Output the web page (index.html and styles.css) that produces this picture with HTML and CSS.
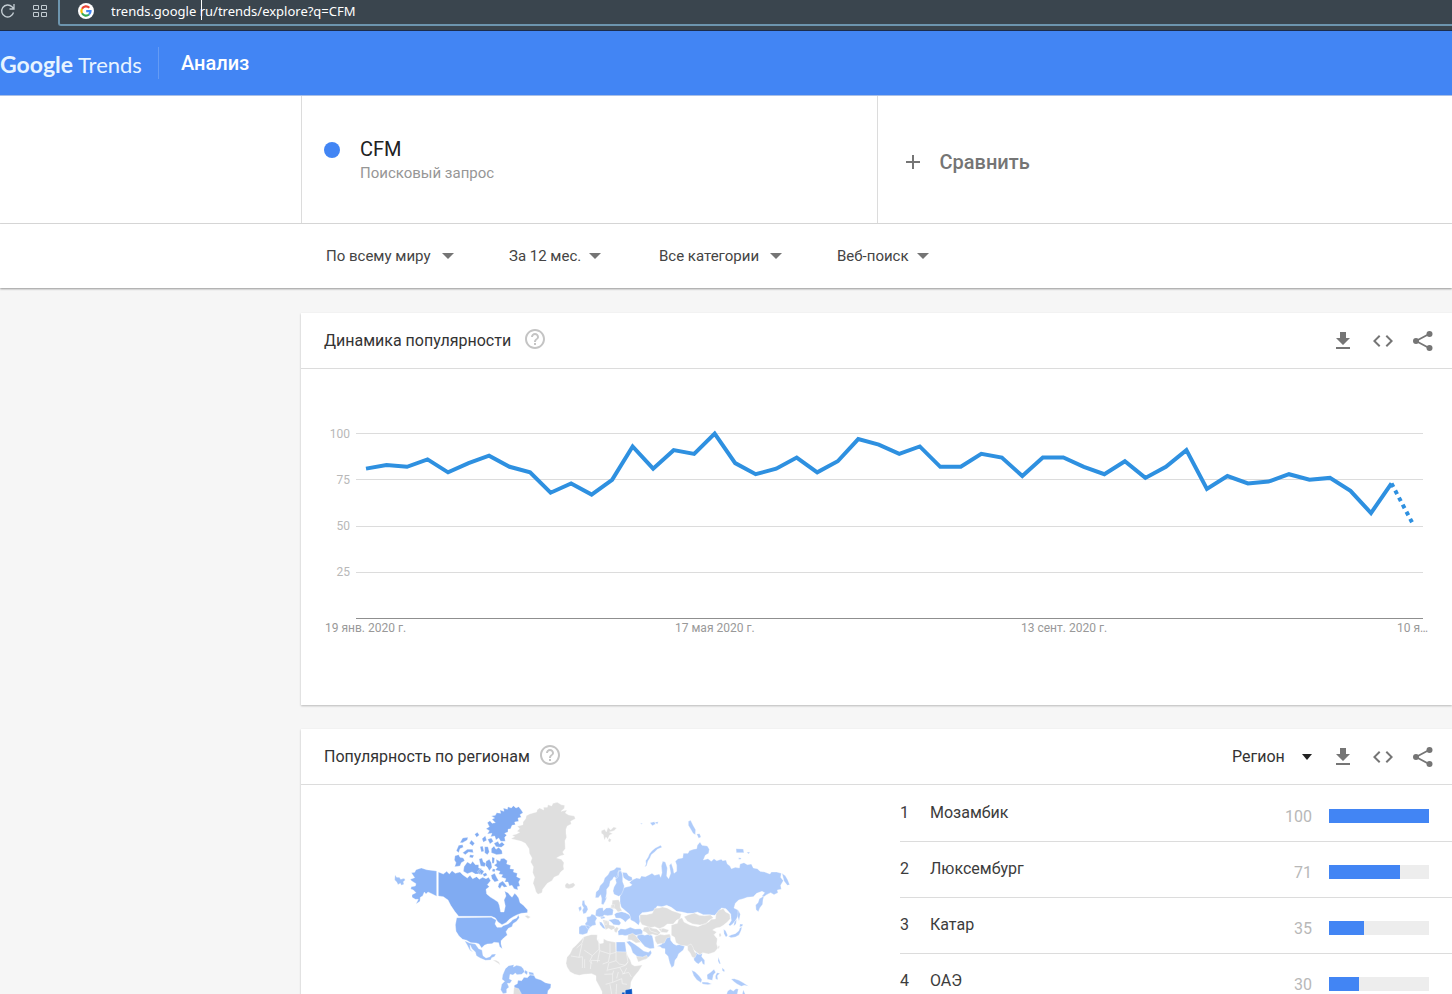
FILE: index.html
```html
<!DOCTYPE html>
<html lang="ru">
<head>
<meta charset="utf-8">
<title>CFM – Анализ – Google Trends</title>
<link rel="stylesheet" href="styles.css">
</head>
<body>
<svg class="sprite" aria-hidden="true">
  <symbol id="i-download" viewBox="0 0 24 24"><path d="M19 9h-4V3H9v6H5l7 7 7-7zM5 18v2h14v-2H5z"/></symbol>
  <symbol id="i-code" viewBox="0 0 24 24"><path d="M9.4 16.6 4.8 12l4.600-4.600L8 6l-6 6 6 6 1.400-1.400zm5.200 0 4.600-4.600-4.600-4.600L16 6l6 6-6 6-1.400-1.400z"/></symbol>
  <symbol id="i-share" viewBox="0 0 24 24"><path d="M5 12 19 4.500M5 12l14 7.500" fill="none" stroke="currentColor" stroke-width="1.800"/><circle cx="5" cy="12" r="3"/><circle cx="18.500" cy="5" r="3"/><circle cx="18.500" cy="19" r="3"/></symbol>
  <symbol id="i-help" viewBox="0 0 24 24"><path d="M11 18h2v-2h-2v2zm1-16C6.480 2 2 6.480 2 12s4.480 10 10 10 10-4.480 10-10S17.520 2 12 2zm0 18c-4.410 0-8-3.590-8-8s3.590-8 8-8 8 3.590 8 8-3.590 8-8 8zm0-14c-2.210 0-4 1.790-4 4h2c0-1.100.9-2 2-2s2 .9 2 2c0 2-3 1.750-3 5h2c0-2.250 3-2.500 3-5 0-2.210-1.790-4-4-4z"/></symbol>
</svg>

<div class="app">
  <div class="browser">
    <button class="browser-btn" aria-label="Обновить"><svg width="16" height="16" viewBox="0 0 16 16"><path d="M13.500 9.500A6 6 0 1 1 12 3.800L13.500 5.500M14 1v5H9.500" fill="none" stroke="currentColor" stroke-width="1.300"/></svg></button>
    <button class="browser-btn" aria-label="Экспресс-панель"><svg width="14" height="12" viewBox="0 0 14 12"><path d="M.5.500h5v4h-5zM8.500.500h5v4h-5zM.5 7.500h5v4h-5zM8.500 7.500h5v4h-5z" fill="none" stroke="currentColor"/></svg></button>
    <div class="address">
      <svg class="favicon" width="16" height="16" viewBox="0 0 16 16"><circle cx="8" cy="8" r="8" fill="#fff"/><g fill="none" stroke-width="2.200"><path d="M11.300 4.700A4.600 4.600 0 0 0 4 5.700" stroke="#ea4335"/><path d="M4 5.700a4.600 4.600 0 0 0 0 4.600" stroke="#fbbc05"/><path d="M4 10.300a4.600 4.600 0 0 0 7 1.200" stroke="#34a853"/><path d="M11 11.500A4.600 4.600 0 0 0 12.500 8.200H8.200" stroke="#4285f4"/></g></svg>
      <div class="url"><input type="text" aria-label="Адрес" value="trends.google ru/trends/explore?q=CFM"><span class="caret"></span></div>
    </div>
  </div>

  <header class="topbar">
    <a class="logo" href="#"><span class="logo-main">Google</span> <span class="logo-sub">Trends</span></a>
    <span class="topbar-line"></span>
    <h1 class="topbar-title">Анализ</h1>
  </header>

  <section class="terms">
    <div class="term">
      <span class="dot"></span>
      <div><div class="term-name">CFM</div><div class="term-kind">Поисковый запрос</div></div>
    </div>
    <button class="compare"><svg width="16" height="16" viewBox="0 0 16 16"><path d="M8 1v14M1 8h14" stroke="currentColor" stroke-width="2"/></svg>Сравнить</button>
  </section>

  <section class="filters">
    <div class="pick"><select class="w-long" aria-label="Регион"><option>По всему миру</option></select></div>
    <div class="pick"><select class="w-short" aria-label="Период"><option>За 12 мес.</option></select></div>
    <div class="pick"><select class="w-mid" aria-label="Категория"><option>Все категории</option></select></div>
    <div class="pick"><select class="w-short" aria-label="Тип поиска"><option>Веб-поиск</option></select></div>
  </section>

  <main class="content">
    <section class="card">
      <div class="card-head wide-gap">
        <h2>Динамика популярности</h2>
        <button class="help" aria-label="Справка"><svg><use href="#i-help"/></svg></button>
        <div class="tools">
          <button aria-label="Скачать"><svg><use href="#i-download"/></svg></button>
          <button aria-label="Встроить"><svg><use href="#i-code"/></svg></button>
          <button aria-label="Поделиться"><svg><use href="#i-share"/></svg></button>
        </div>
      </div>
      <svg class="chart" viewBox="0 0 1151 336">
        <path class="grid" d="M55 64.500H1122M55 110.500H1122M55 157.500H1122M55 203.500H1122"/>
        <path class="axis" d="M55 249.500H1122"/>
        <g class="tick" text-anchor="end"><text x="49" y="69">100</text><text x="49" y="115">75</text><text x="49" y="161">50</text><text x="49" y="207">25</text></g>
        <g class="date"><text x="24" y="263">19 янв. 2020 г.</text><text x="374" y="263">17 мая 2020 г.</text><text x="720" y="263">13 сент. 2020 г.</text><text x="1096" y="263">10 я…</text></g>
        <g transform="translate(65 249.500) scale(20.510 -1.850)">
          <polyline class="trend" points="0,81 1,83 2,82 3,86 4,79 5,84 6,88 7,82 8,79 9,68 10,73 11,67 12,75 13,93 14,81 15,91 16,89 17,100 18,84 19,78 20,81 21,87 22,79 23,85 24,97 25,94 26,89 27,93 28,82 29,82 30,89 31,87 32,77 33,87 34,87 35,82 36,78 37,85 38,76 39,82 40,91 41,70 42,77 43,73 44,74 45,78 46,75 47,76 48,69 49,57 50,73"/>
          <polyline class="trend partial" points="50,73 51,52"/>
        </g>
      </svg>
    </section>

    <section class="card">
      <div class="card-head">
        <h2>Популярность по регионам</h2>
        <button class="help" aria-label="Справка"><svg><use href="#i-help"/></svg></button>
        <div class="tools">
          <div class="pick region"><select aria-label="Уровень"><option>Регион</option></select></div>
          <button aria-label="Скачать"><svg><use href="#i-download"/></svg></button>
          <button aria-label="Встроить"><svg><use href="#i-code"/></svg></button>
          <button aria-label="Поделиться"><svg><use href="#i-share"/></svg></button>
        </div>
      </div>
      <div class="regions">
        <svg class="map" viewBox="0 0 1260 640" role="img" aria-label="Карта популярности">
          <g class="ca">
            <path d="M175 246L190 252 200 244 208 252 216 242 226 250 240 246 248 254 262 264 270 256 278 266 290 260 298 268 308 262 318 266 326 262 332 272 322 284 328 290 318 298 320 312 332 322 342 328 354 336 358 346 362 366 372 366 376 348 372 330 378 318 374 304 384 308 390 316 396 322 404 310 410 316 416 324 420 338 430 346 443 360 442 368 424 370 412 374 400 380 388 388 378 398 366 404 354 396 346 384 334 379 236 379 224 364 212 346 204 330 190 320 175 318Z"/>
            <path d="M372 205L382 212 380 222 392 226 390 236 402 238 400 246 412 250 410 260 422 266 416 276 420 288 412 290 414 300 402 296 396 286 388 288 384 276 374 276 378 266 364 262 368 254 356 252 360 244 346 240 352 232 342 226 350 220 348 208 360 214 362 206Z"/>
            <path d="M322 98L330 92 336 100 346 98 336 88 344 84 334 78 346 76 350 68 362 70 360 60 372 64 370 54 382 58 384 50 394 54 400 47 408 54 416 50 424 60 429 68 420 74 424 82 414 84 416 94 404 96 406 104 396 106 392 116 384 118 384 126 374 130 380 136 374 142 376 154 362 154 356 144 348 150 344 138 332 140 336 130 322 132 328 122 318 116 328 110Z"/>
            <path d="M252 230L262 216 272 222 278 214 286 224 296 224 296 234 306 236 298 244 302 252 286 252 276 246 262 251 250 244ZM225 197L236 194 240 202 250 204 254 212 244 218 240 228 224 230 228 218 223 210ZM229 182L236 166 248 164 250 172 240 176 236 188ZM240 158L248 144 264 142 262 150 248 158ZM248 188L262 178 278 178 280 188 266 186 256 194ZM268 160L274 150 284 160 278 168ZM284 133L292 127 298 135 290 142ZM306 146L316 137 320 151 310 157ZM300 170L308 168 312 184 304 186ZM314 170L324 170 328 186 322 194 314 188ZM334 176L342 168 348 178 356 172 366 182 367 192 350 194 334 188ZM297 207L306 204 310 216 318 220 314 230 302 228ZM293 243L302 236 312 244 306 254 296 252ZM318 214L328 208 334 218 336 232 328 242 322 232 316 226ZM336 201L344 204 342 220 336 220ZM342 160L354 154 358 162 366 156 374 164 364 172 348 170ZM323 148L334 144 340 154 330 162ZM333 256L344 250 350 262 356 272 344 276 336 266ZM357 280L368 273 374 280 382 290 372 292 366 286 360 296 354 290ZM308 252L318 248 322 256 312 260ZM270 194L282 196 278 204 268 202ZM338 236L346 238 344 246 336 244Z"/>
          </g>
          <g class="us">
            <path d="M94 248L104 247 108 239 124 234 140 239 170 243 170 319 155 311 144 306 138 312 133 306 128 318 121 322 120 334 108 342 115 328 106 328 96 322 96 314 108 308 100 300 92 297 94 290 106 288 108 281 94 272 91 268 104 263 100 257Z"/>
            <path d="M230 383L334 382 343 387 349 390 345 402 351 412 364 412 370 407 384 402 392 396 398 389 410 384 415 375 418 383 410 394 399 401 396 410 385 415 378 425 382 435 371 444 363 452 363 462 367 476 359 470 356 458 342 457 336 461 322 462 313 466 305 474 297 462 288 459 272 458 260 451 248 448 237 438 228 424 226 405Z"/>
            <path d="M425 572L432 562 442 563 450 555 462 556 467 565 483 570 496 578 513 582 512 593 504 602 499 640H425L421 611 410 606 402 599 403 586 412 581 414 571Z"/>
          </g>
          <g class="mx">
            <path d="M254 452L269 459 286 462 296 476 306 480 309 497 318 504 330 500 336 493 348 492 343 500 335 503 332 510 316 511 300 504 289 497 286 486 276 476 270 465 271 478 279 487 269 480 261 464Z"/>
            <path d="M376 536L386 527 402 524 400 531 410 526 423 529 430 536 434 545 425 553 411 554 406 549 399 555 390 553 388 567 396 571 390 580 382 580 387 592 380 597 380 609 369 611 362 599 365 583 374 574 366 568 368 555ZM435 540l8 5-2 10-8-7zM446 545l14 3 2 7-14-1zM45 254L50 262 58 262 62 268 72 265 76 270 70 275 72 283 64 286 61 280 54 284 50 276 44 270Z"/>
          </g>
          <path class="none" d="M393 146L404 140 396 136 410 132 419 127 411 124 419 116 412 109 429 104 429 96 437 86 439 77 449 72 462 68 470 66 471 60 479 54 491 60 491 52 502 52 504 44 515 48 519 40 532 37 544 44 554 46 553 55 543 64 561 60 556 69 566 75 583 78 586 86 572 94 574 102 562 108 558 118 558 130 560 142 555 152 556 176 548 186 553 194 540 198 530 204 544 208 552 218 550 228 552 238 542 246 536 256 522 262 516 272 502 280 494 290 488 298 486 308 474 313 468 306 464 292 459 280 464 262 458 248 460 230 452 216 456 204 448 190 447 176 436 160 424 154ZM555 285L561 278 568 283 580 278 586 285 578 293 566 296 556 293ZM338 510L348 511 357 516 361 526 354 520ZM402 592L416 596 424 611 421 640 398 636ZM434 378L442 376 452 381 444 386Z"/>
          <g transform="translate(540 0)">
            <g class="ru">
              <path d="M180 320L184 306 182 298 196 292 212 288 216 284 208 278 216 270 230 264 240 266 244 258 256 260 268 254 276 250 284 256 298 252 302 262 306 248 304 228 308 214 316 216 322 234 320 258 326 266 332 250 328 226 334 220 340 238 342 250 350 244 350 226 346 214 354 206 368 204 370 190 384 190 388 182 400 178 410 176 412 166 420 156 426 166 442 168 448 178 446 190 436 196 430 210 444 206 454 214 462 206 470 212 484 208 488 212 498 210 502 222 510 228 514 236 526 232 538 234 540 222 552 218 562 224 574 222 580 234 592 236 600 244 614 246 630 252 634 246 650 246 664 250 662 262 670 272 662 286 664 298 652 300 654 308 642 314 632 308 620 314 610 322 606 318 614 308 606 304 590 310 580 320 562 322 550 326 536 330 526 340 522 354 534 360 536 374 528 390 518 402 510 408 506 404 514 392 512 372 498 356 484 354 476 366 464 376 446 374 430 374 412 366 400 370 382 370 366 366 350 364 334 352 320 346 306 350 292 348 282 362 264 366 246 368 238 378 240 394 236 406 224 396 212 390 208 372 196 362 184 352 180 340Z"/>
              <path d="M612 318L609 330 608 343 600 353 595 365 588 359 587 345 594 338 598 326ZM254 231L258 222 257 212 264 202 268 192 276 182 286 174 302 166 306 172 292 178 284 186 274 194 270 204 264 213 260 227ZM385 94L392 91 400 107 407 119 406 134 399 130 393 119 385 106ZM410 132L419 131 423 141 416 145ZM528 176L550 177 552 188 529 188ZM536 203l8 1-2 4-6 0ZM560 187l10-1-4 6ZM666 250L676 257 683 269 689 284 682 286 672 273ZM535 359l6 14-4 20-4-14ZM523 397l7-10-2 15-7 6ZM270 98l13-3 4 7-10 5ZM284 97l11-2-3 8ZM240 101l7-2-1 4Z"/>
              <path d="M106 323L108 306 116 299 120 287 130 277 134 264 144 254 150 243 162 239 170 232 182 233 184 241 174 246 176 258 170 266 162 260 157 269 151 273 148 288 140 298 140 310 137 325 142 318 136 334 130 344 124 342 125 326 122 314 115 323ZM162 291L169 279 166 267 173 254 176 241 184 244 188 256 188 275 193 288 190 300 184 314 176 319 162 313 159 303ZM187 247L200 248 206 257 216 262 217 271 207 274 195 267 190 262Z"/>
              <path d="M108 361l9-7 12-1 1 9 9-8 15-1 6 7-2 15-15 2-11-2-5 8-11-3-10-3zM80 381l11-2 4-7 10 4 6 9-5 9 2 11-11 2-10 8 1 7-9-10-4-11 6-7zM57 411l8-5 17 0 10 5-7 9-3 10-14 4-11-2zM67 332l6-1 2 12 6 6 3 9-6 11-8 3-3-11 4-8-5-8zM55 353l8-5 2 9-6 8zM118 395l7 2 8 12 5 9-9-3-9-11zM120 380l12-1 4 5-12 3zM145 390l20-4 11 3 7 10-5 7-17-2-7-7zM163 373l7-5 15-3 11 3 12 6 4 9-9 6-7 8-6-7-9-5-14-1z"/>
              <path d="M174 424l8-8 14 2 15-6 14 5 16-1 7 7-1 10-18 3-18-2-16 3-8-2-12 1zM232 435l12-3 10 4 13-4 10 5 4 19 2 19-13 1-15-6-8-9-7-8-9-10zM168 456l27 0 2 13 2 18-31 0zM199 455l10-2 14 9 14 10 14 11 14 4 7-6 3 8-5 8-13 11-20 0-8-11-11-9-6-17zM291 469l14-6 3-13 9-5 5-10 9 2 1 14 8 10 9 5 11-3 14 6-4 11-14 11-4 11-7 9-3 16-7 6-6-14-5-20-9-9 0-14-9-1-5-5zM96 519l7-4 14 1 13 2-2 11-9 12-11 2-12-5z"/>
              <path d="M400 492l9-5 5 6 13-3-2 10 9 11 0 13-6-2-3-9-10 9-6-4-7-7zM385 470l4-1-1 13-4-2zM395 541l10 4 13 13 8 11-3 9-13-9-9-12zM426 576l17 1 12 5-11 2-17-2zM441 554l11-7 10-9 5 9-7 8-3 16-15-3zM466 558l5-10 9 2-8 7 2 12-7-2zM475 501l4 11 3 10-4-1-4-8zM486 533l8 7-1 6-6-4zM513 567l10-1 14 5 13 7 16 11-13-3-9 3-13-7-8-6zM500 612l3-9 8-5 9 5 8-7 7 1-3 15 13 9 5-22 7 17 8 22h-75zM505 439l10-5 11-3 10-8 4-10 6-2-3 11-6 13-11 6-13 2zM540 402l9 1-2 6-8 2zM491 418l6 4 6 14-5 6-6-11z"/>
            </g>
            <g class="none">
              <path d="M240 374L260 374 277 370 284 355 298 354 307 351 321 354 336 362 350 367 364 372 360 386 350 390 340 402 322 402 312 410 298 416 284 410 268 414 258 408 246 404 240 394ZM372 380L386 374 404 369 418 376 433 377 452 375 460 383 446 392 438 402 420 405 398 402 382 394ZM334 405L352 400 356 388 366 383 372 396 390 405 414 410 432 402 446 396 454 388 466 387 468 372 477 360 490 356 497 366 509 372 511 386 502 396 490 406 480 412 468 414 458 420 470 426 462 434 472 446 470 462 474 474 464 486 446 492 428 488 420 494 406 484 396 474 380 468 362 466 348 458 344 442 334 436Z"/>
              <path d="M252 412l15-2 10 5 13 2 12 11-10 9-15-4-10 3-9-9-10-4zM284 440l17-7 12 2 16-3 3 9-12 3-7 15-21 4-6-10zM296 417l14-2 17 5-6 8-17-1zM204 435l14-5 10 7 7 11 8 9-15 2-14-9-11-1zM228 499l20 2 12-5 4 8-29 12zM383 467l10-5 6 10 4 12 7 9-6 11-8-3-6-13-7-8zM157 331l19-2 4 9 1 15 5 9-12 4-7-9-12-4zM128 389l18 4 2 12 14 2 4 8-12 5-8-5-9 4-3-11zM153 344l11 0-3 13-9-2zM134 393l9-1-3 12-5-1zM162 418l8-7 6 3-6 14-6-2z"/>
              <path d="M124 122l10-4 5 8 5-14 8 8 9-9 9 3-8 8-14 4 10 5-9 4-6 13-5-7-5 10-3-17-6-4zM147 144l7 5-4 8-6-4zM477 431l5-1 2 8-6 3zM475 467l4 0-2 9-3-1z"/>
              <path d="M72 440l21-6 19 0-1 14 8 13 11-2 1-13 11 6 25 5 1 28 32 1 2 10 9 15 4 12 9 5 23-3-11 18-15 18-8 15-1 13-5 20 5 23-86 8 0-35-7-14-11-20 0-14-13-6-23 2-14 3-14-3-14-8-9-14-3-11 3-18 9-11 8-16 8-7z"/>
            </g>
            <path class="borders" d="M72 440l-6 20-16 14M66 462l-9 40-24-4M57 502l10-2 0 34M73 481l24 16 20-19-1-30M97 497l-8 17 8 7M118 460l1 22 31 10 0-32M119 482l-7 35M150 492l-5 24-17 6M150 492l18-5v-32M168 487l0 25-22 7M199 487l5 29-8 10-18-4-10-10M146 520l-5 24M144 540l35-8 12 20 9-18M179 532l17-6 8-10M133 553l25-1 3-10M158 552l0 25-21 6M158 577l27-11 2 15 14 2M175 546l-5 19M186 552l20-5 8 14M150 583l5 29M170 582l-2 32M266 411l5 12 22 7M305 413l-3 15M120 512l-26-1-3 26M74 508l0 26"/>
            <path class="peak" d="M196 600l20-4 1 18-6 28h-15l3-22-4-5zM186 607l9 0-1 12-9-3z"/>
          </g>
        </svg>
        <table class="ranking">
          <tbody>
            <tr><td class="rank">1</td><td class="place">Мозамбик</td><td class="value">100</td><td class="bar"><div class="track"><div class="fill" style="width:100%"></div></div></td></tr>
            <tr><td class="rank">2</td><td class="place">Люксембург</td><td class="value">71</td><td class="bar"><div class="track"><div class="fill" style="width:71%"></div></div></td></tr>
            <tr><td class="rank">3</td><td class="place">Катар</td><td class="value">35</td><td class="bar"><div class="track"><div class="fill" style="width:35%"></div></div></td></tr>
            <tr><td class="rank">4</td><td class="place">ОАЭ</td><td class="value">30</td><td class="bar"><div class="track"><div class="fill" style="width:30%"></div></div></td></tr>
          </tbody>
        </table>
      </div>
    </section>
  </main>
</div>
</body>
</html>
```

FILE: styles.css
```css
* { box-sizing: border-box; }
body { margin: 0; font-family: Roboto, "Noto Sans", sans-serif; color: #3c3c3c; background: #f6f6f6; }
button { border: 0; padding: 0; margin: 0; background: none; font: inherit; color: inherit; cursor: pointer; }
button svg { display: block; }
h1, h2 { margin: 0; font-weight: 400; }
.sprite { display: none; }

.app { display: flex; flex-direction: column; height: 100vh; overflow: hidden; }
.app > * { flex-shrink: 0; }

/* browser bar */
.browser { display: flex; height: 31px; background: #3a454e; border-bottom: 1px solid #1b2c4d; color: #c3ccd2; }
.browser-btn { height: 22px; display: flex; align-items: center; }
.browser-btn + .browser-btn { margin-left: 17px; }
.address { flex: 1; display: flex; align-items: center; gap: 17px; height: 26px; margin-left: 11px; padding: 0 0 3px 18px; border: solid #6d95ae; border-width: 0 0 2px 2px; border-radius: 0 0 0 3px; }
.url { position: relative; flex: 1; }
.url input { display: block; width: 100%; height: 22px; border: 0; padding: 0; background: none; outline: 0; color: #fff; font: 13px/22px "Noto Sans", sans-serif; }
.caret { position: absolute; left: 90px; top: 0; width: 1px; height: 20px; background: #fff; }

/* header */
.topbar { display: flex; align-items: center; height: 65px; background: #4285f4; color: #fff; border-bottom: 1px solid #a9bfe6; }
.logo { padding-top: 2px; color: #e8f4ff; text-decoration: none; font: 22px/32px Lato, sans-serif; }
.logo-main { font-size: 23px; font-weight: 700; }
.topbar-line { width: 1px; height: 32px; margin: 0 22px 0 16px; background: #649bf5; }
.topbar-title { font-size: 20px; line-height: 24px; font-weight: 500; }

/* search terms */
.terms { display: grid; grid-template-columns: 1fr 1fr; height: 128px; padding-left: 301px; background: #fff; border-bottom: 1px solid #dcdcdc; }
.term { display: flex; align-items: flex-start; gap: 20px; padding: 41px 0 0 22px; border-left: 1px solid #dcdcdc; }
.dot { width: 16px; height: 16px; margin-top: 5px; border-radius: 50%; background: #4285f4; }
.term-name { font-size: 20px; line-height: 24px; color: #212121; }
.term-kind { font-size: 15px; line-height: 24px; color: #969696; }
.compare { display: flex; align-items: center; gap: 19px; padding: 4px 0 0 27px; border-left: 1px solid #dcdcdc; font-size: 20px; font-weight: 500; color: #757575; }

/* filters */
.filters { position: relative; display: grid; grid-template-columns: 183px 150px 178px auto; align-items: center; height: 64px; padding-left: 326px; background: #fff; box-shadow: 0 1px 2px rgba(0, 0, 0, .4); }
.pick { position: relative; justify-self: start; display: flex; }
.pick select { appearance: none; border: 0; padding: 0; background: none; outline: 0; font: 15px/24px Roboto, sans-serif; color: #444; }
.pick::after { content: ""; position: absolute; right: 0; top: 9px; border: solid transparent; border-width: 6px 6px 0; border-top-color: #757575; pointer-events: none; }
.w-long { width: 128px; }
.w-mid { width: 123px; }
.w-short { width: 92px; }

/* cards */
.content { display: flex; flex-direction: column; gap: 24px; padding: 25px 0 0 301px; }
.card { background: #fff; box-shadow: 0 1px 2px rgba(0, 0, 0, .25); }
.card-head { display: flex; align-items: center; gap: 8px; height: 56px; padding: 0 17px 0 23px; border-bottom: 1px solid #dcdcdc; }
.wide-gap { gap: 12px; }
.card-head h2 { font-size: 16px; line-height: 24px; color: #333; }
.help { margin-bottom: 3px; color: #c4c4c4; }
.tools { display: flex; align-items: center; gap: 16px; margin-left: auto; color: #757575; }
.card-head button svg { width: 24px; height: 24px; fill: currentColor; }
.region select { width: 80px; font-size: 16px; color: #333; }
.region { margin-right: 3px; }
.region::after { border-width: 6px 5px 0; border-top-color: #222; }

/* chart */
.chart { display: block; width: 100%; height: auto; font: 12px Roboto, sans-serif; }
.grid { stroke: #dcdcdc; }
.axis { stroke: #8f8f8f; }
.tick { fill: #b8b8b8; }
.date { fill: #999; }
.trend { fill: none; stroke: #2e90e0; stroke-width: 4px; vector-effect: non-scaling-stroke; }
.partial { stroke-dasharray: 4 4; }

/* regions */
.regions { display: grid; grid-template-columns: 578px 1fr; column-gap: 21px; }
.map { width: 420px; margin: 5px 0 0; justify-self: center; fill: #aecbfa; stroke: #fff; stroke-width: 1; }
.ca { fill: #80abf2; }
.us { fill: #8ab3f6; }
.mx { fill: #9dc0f8; }
.none { fill: #dfdfdf; }
.borders { fill: none; stroke: #f5f5f5; stroke-width: 2; }
.peak { fill: #0b57c4; }
.ranking { width: 100%; border-collapse: collapse; align-self: start; font-size: 16px; line-height: 24px; }
.ranking tr { height: 56px; border-bottom: 1px solid #dcdcdc; }
.ranking td { padding: 0; }
.rank { width: 30px; }
.value { width: 60px; text-align: right; color: #b8b8b8; }
.ranking .value { padding-top: 8px; }
.ranking .bar { width: 140px; padding: 6px 23px 0 17px; }
.track { height: 14px; background: #ededed; }
.fill { height: 14px; background: #4285f4; }
```
